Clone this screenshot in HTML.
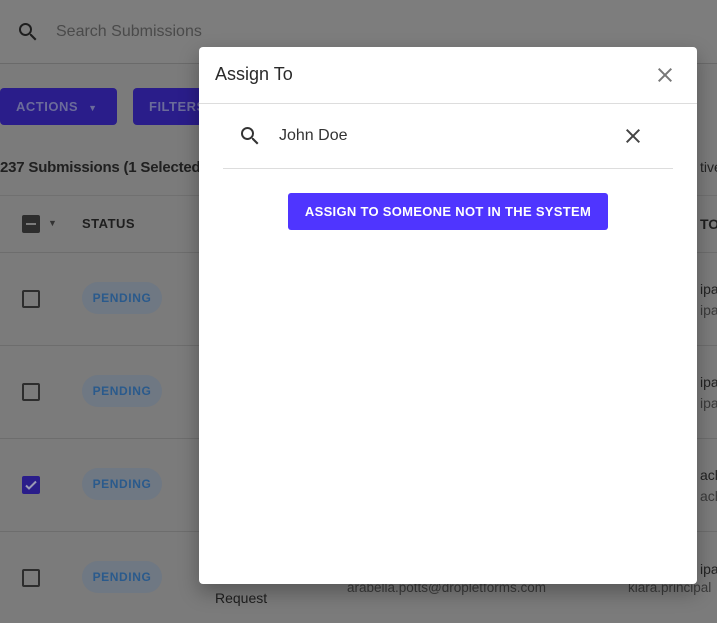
<!DOCTYPE html>
<html><head><style>
*{margin:0;padding:0;box-sizing:border-box}
body{width:717px;height:623px;overflow:hidden;background:#7b7b7b;font-family:"Liberation Sans",Arial,sans-serif;position:relative}
.a{position:absolute}
.line{position:absolute;left:0;width:717px;height:1px;background:#6d6d6d}
.cb{position:absolute;left:22px;width:18px;height:18px;border:2px solid #2d2d2d;border-radius:2px}
.pill{position:absolute;left:82px;width:80px;height:32px;border-radius:16px;background:#6f7883;color:#2a5a8c;font-size:12px;font-weight:bold;letter-spacing:.6px;text-align:center;line-height:32px}
.rt{position:absolute;font-size:14px;color:#222}
.rt2{position:absolute;font-size:14px;color:#3a3a3a}
</style></head><body>
<div class="a" style="left:0;top:0;width:717px;height:64px;background:#7d7d7d;border-bottom:1px solid #6a6a6a"></div>
<svg class="a" style="left:16px;top:20px" width="24" height="24" viewBox="0 0 24 24"><path d="M15.5 14h-.79l-.28-.27A6.47 6.47 0 0016 9.5 6.5 6.5 0 109.5 16c1.61 0 3.09-.59 4.23-1.57l.27.28v.79l5 4.99L20.49 19l-4.99-5zm-6 0C7.01 14 5 11.99 5 9.5S7.01 5 9.5 5 14 7.01 14 9.5 11.99 14 9.5 14z" fill="#1e1e1e"/></svg>
<div class="a" style="left:56px;top:23px;font-size:16px;color:#4a4a4a">Search Submissions</div>
<div class="a" style="left:0;top:88px;width:117px;height:37px;background:#2a1d8a;border-radius:4px;color:#6b6b9a;font-size:13px;font-weight:bold;letter-spacing:.5px;line-height:37px;padding-left:16px">ACTIONS <span style="font-size:9px;margin-left:6px">▼</span></div>
<div class="a" style="left:133px;top:88px;width:80px;height:37px;background:#2a1d8a;border-radius:4px;color:#6b6b9a;font-size:13px;font-weight:bold;letter-spacing:.5px;line-height:37px;padding-left:16px">FILTERS</div>
<div class="a" style="left:0;top:159px;font-size:15px;font-weight:bold;color:#202020;letter-spacing:-.2px">237 Submissions (1 Selected)</div>
<div class="rt" style="top:159px;left:700px">tive</div>
<div class="line" style="top:195px;background:#707070"></div>
<div class="a" style="left:22px;top:215px;width:18px;height:18px;background:#2d2d2d;border-radius:2px"><div style="position:absolute;left:4px;top:8px;width:10px;height:2px;background:#7b7b7b"></div></div>
<div class="a" style="left:48px;top:218px;font-size:9px;color:#333">▼</div>
<div class="a" style="left:82px;top:216px;font-size:13px;font-weight:bold;color:#1e1e1e;letter-spacing:.5px">STATUS</div>
<div class="a" style="left:700px;top:216px;font-size:14px;font-weight:bold;color:#1e1e1e">TO</div>
<div class="line" style="top:252px"></div>
<div class="cb" style="top:290px"></div><div class="pill" style="top:282px">PENDING</div>
<div class="rt" style="top:281px;left:700px">ipal</div><div class="rt2" style="top:302px;left:700px">ipal</div>
<div class="line" style="top:345px"></div>
<div class="cb" style="top:383px"></div><div class="pill" style="top:375px">PENDING</div>
<div class="rt" style="top:374px;left:700px">ipal</div><div class="rt2" style="top:395px;left:700px">ipal</div>
<div class="line" style="top:438px"></div>
<div class="a" style="left:22px;top:476px;width:18px;height:18px;background:#2a1d8a;border-radius:2px"><svg width="18" height="18" viewBox="0 0 18 18"><path d="M4 9.5l3 3 7-7" stroke="#9a9ab5" stroke-width="2" fill="none"/></svg></div>
<div class="pill" style="top:468px">PENDING</div>
<div class="rt" style="top:467px;left:700px">ach</div><div class="rt2" style="top:488px;left:700px">ach</div>
<div class="line" style="top:531px"></div>
<div class="cb" style="top:569px"></div><div class="pill" style="top:561px">PENDING</div>
<div class="rt" style="top:561px;left:700px">ipal</div>
<div class="a" style="left:347px;top:580px;font-size:13.5px;color:#3a3a3a">arabella.potts@dropletforms.com</div>
<div class="a" style="left:628px;top:580px;font-size:13.5px;color:#3a3a3a">kiara.principal</div>
<div class="a" style="left:215px;top:590px;font-size:14px;color:#1e1e1e">Request</div>

<div class="a" style="left:199px;top:47px;width:498px;height:537px;background:#fff;border-radius:4px;box-shadow:0 8px 20px rgba(0,0,0,.3)">
<div class="a" style="left:16px;top:17px;font-size:18px;color:#2a2a2a">Assign To</div>
<svg class="a" style="left:454px;top:16px" width="24" height="24" viewBox="0 0 24 24"><path d="M19 6.41L17.59 5 12 10.59 6.41 5 5 6.41 10.59 12 5 17.59 6.41 19 12 13.41 17.59 19 19 17.59 13.41 12z" fill="#777"/></svg>
<div class="a" style="left:0;top:56px;width:498px;height:1px;background:#ddd"></div>
<svg class="a" style="left:39px;top:77px" width="24" height="24" viewBox="0 0 24 24"><path d="M15.5 14h-.79l-.28-.27A6.47 6.47 0 0016 9.5 6.5 6.5 0 109.5 16c1.61 0 3.09-.59 4.23-1.57l.27.28v.79l5 4.99L20.49 19l-4.99-5zm-6 0C7.01 14 5 11.99 5 9.5S7.01 5 9.5 5 14 7.01 14 9.5 11.99 14 9.5 14z" fill="#333"/></svg>
<div class="a" style="left:80px;top:80px;font-size:16px;color:#333">John Doe</div>
<svg class="a" style="left:422px;top:77px" width="24" height="24" viewBox="0 0 24 24"><path d="M19 6.41L17.59 5 12 10.59 6.41 5 5 6.41 10.59 12 5 17.59 6.41 19 12 13.41 17.59 19 19 17.59 13.41 12z" fill="#444"/></svg>
<div class="a" style="left:24px;top:121px;width:450px;height:1px;background:#ddd"></div>
<div class="a" style="left:89px;top:146px;width:320px;height:37px;background:#4f35ff;border-radius:3px;color:#fff;font-size:13px;font-weight:bold;letter-spacing:.3px;text-align:center;line-height:37px">ASSIGN TO SOMEONE NOT IN THE SYSTEM</div>
</div>
</body></html>
